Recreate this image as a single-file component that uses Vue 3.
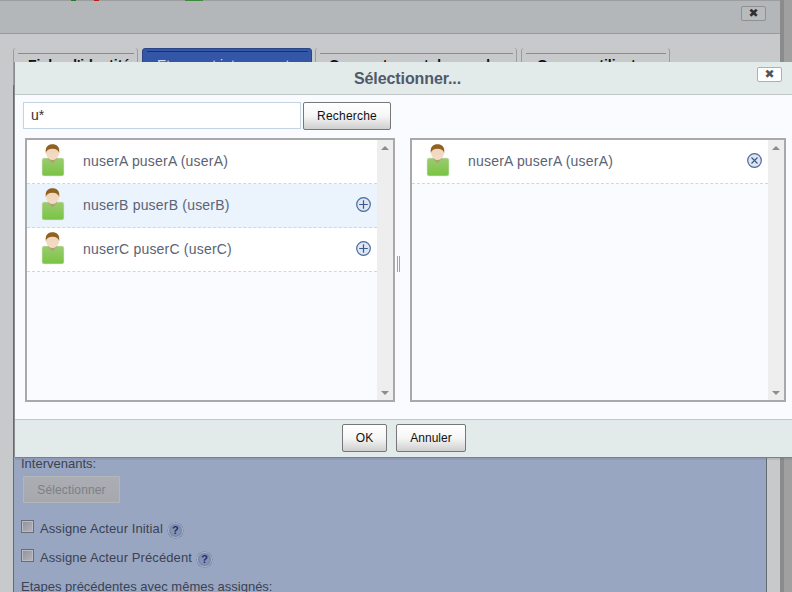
<script setup>
const left = [
  { name: 'nuserA puserA (userA)', action: '' },
  { name: 'nuserB puserB (userB)', action: 'add', hover: true },
  { name: 'nuserC puserC (userC)', action: 'add' },
]
const right = [{ name: 'nuserA puserA (userA)', action: 'remove' }]
const lists = [left, right]
const tabs = [
  { label: "Fiche d'identité", cls: 't1' },
  { label: 'Etapes et intervenants', cls: 't2 active' },
  { label: 'Comportement des modes', cls: 't3' },
  { label: 'Groupe utilisateur', cls: 't4' },
]
</script>

<template>
  <div class="page">
    <div class="back">
      <div class="back-head">
        <i class="bit b1"></i><i class="bit b2"></i><i class="bit b3"></i>
        <button class="x back-x">✖</button>
      </div>
      <div class="tabs">
        <div v-for="t in tabs" :key="t.label" class="tab" :class="t.cls"><span>{{ t.label }}</span></div>
      </div>
      <div class="panel">
        <div class="form">
          <div class="lab">Intervenants:</div>
          <button class="disabled">Sélectionner</button>
          <label class="chk c1"><i class="box"></i><span>Assigne Acteur Initial</span><i class="help">?</i></label>
          <label class="chk c2"><i class="box"></i><span>Assigne Acteur Précédent</span><i class="help">?</i></label>
          <div class="lab last">Etapes précédentes avec mêmes assignés:</div>
        </div>
      </div>
    </div>

    <div class="modal">
      <div class="m-head">
        <h1>Sélectionner...</h1>
        <button class="x m-x">✖</button>
      </div>
      <div class="m-body">
        <div class="search">
          <div class="input">u*</div>
          <button class="btn rech">Recherche</button>
        </div>
        <div class="lists">
          <template v-for="(list, li) in lists" :key="li">
            <div class="list" :class="li ? 'lr' : 'll'">
              <div class="rows">
                <div v-for="u in list" :key="u.name" class="row" :class="{ hover: u.hover }">
                  <svg class="avatar" width="24" height="33" viewBox="0 0 24 33">
                    <defs>
                      <linearGradient :id="'g' + li + u.name[5]" x1="0" y1="0" x2="0" y2="1">
                        <stop offset="0" stop-color="#9ccb70" />
                        <stop offset="1" stop-color="#78c443" />
                      </linearGradient>
                      <linearGradient :id="'f' + li + u.name[5]" x1="0" y1="0" x2="0" y2="1">
                        <stop offset="0" stop-color="#efd3b6" />
                        <stop offset="1" stop-color="#f3dcc6" />
                      </linearGradient>
                    </defs>
                    <rect x="1" y="14" width="22" height="18" rx="2" :fill="'url(#g' + li + u.name[5] + ')'" stroke="#dfe8d8" stroke-width="0.6" />
                    <path d="M6.5 14 L11.5 19.5 L16.5 14 Z" fill="#a9a56f" />
                    <ellipse cx="11.5" cy="8.5" rx="6.6" ry="7.5" :fill="'url(#f' + li + u.name[5] + ')'" />
                    <path d="M4.8 9 C4 2.5 7.5 .3 11.5 .3 C15.5 .3 19 2.5 18.2 9 C17.6 6.5 15.5 4.8 11.5 4.8 C7.5 4.8 5.4 6.5 4.8 9 Z" fill="#8f6122" />
                  </svg>
                  <span class="name">{{ u.name }}</span>
                  <svg v-if="u.action" class="act" width="15" height="15" viewBox="0 0 15 15">
                    <circle cx="7.5" cy="7.5" r="6.8" fill="#dfe6f1" stroke="#466a9f" stroke-width="1.2" />
                    <path v-if="u.action === 'add'" d="M7.5 3.2V11.8M3.2 7.5H11.8" stroke="#3a5a8d" stroke-width="1.2" fill="none" />
                    <path v-else d="M4.5 4.5L10.5 10.5M10.5 4.5L4.5 10.5" stroke="#3a5a8d" stroke-width="1.2" fill="none" />
                  </svg>
                </div>
              </div>
              <div class="sb">
                <i class="up"></i>
                <i class="down"></i>
              </div>
            </div>
            <div v-if="!li" class="split"><i></i></div>
          </template>
        </div>
      </div>
      <div class="m-foot">
        <button class="btn ok">OK</button>
        <button class="btn cancel">Annuler</button>
      </div>
    </div>
  </div>
</template>

<style>
html, body { margin: 0; padding: 0; overflow: hidden; }
</style>

<style scoped>
.page {
  position: relative; width: 792px; height: 592px; overflow: hidden;
  background: #a0a0a0; font-family: "Liberation Sans", Arial, sans-serif;
}
.back {
  width: 780px; height: 592px; background: #c8c9ca;
  border-right: 4px solid #8b8b8b; display: flex; flex-direction: column;
}
.back-head {
  position: relative; height: 32px; background: #b3b7b9;
  border-top: 1px solid #9b9d9e; border-bottom: 1px solid #979a9b; flex: none;
}
.bit { position: absolute; top: -1px; height: 1px; }
.b1 { left: 71px; width: 5px; background: #1f7a2c; }
.b2 { left: 94px; width: 5px; background: #b3201c; }
.b3 { left: 185px; width: 18px; background: #3d8a3d; }
.x {
  box-sizing: border-box; width: 25px; height: 15px; padding: 0; border-radius: 2px;
  font: 12px/13px "DejaVu Sans", sans-serif; text-align: center;
}
.back-x {
  position: absolute; left: 741px; top: 5px;
  background: #b8bbbd; border: 1px solid #8e9091; color: #2e2e2e;
}
.tabs { display: flex; gap: 4px; padding: 14px 0 0 13px; height: 37px; flex: none; }
.tab {
  box-sizing: border-box; height: 37px; padding-top: 9px;
  font: bold 14px/16px "Liberation Sans", sans-serif; color: #111;
  position: relative; white-space: nowrap; overflow: hidden;
  border-left: 1px solid #9c9d9e; border-right: 1px solid #9c9d9e; border-radius: 3px 3px 0 0;
}
.tab::before {
  content: ""; position: absolute; left: 4px; right: 3px; top: 5px; height: 1px; background: #8a8b8c;
}
.t1 { width: 125px; padding-left: 14px; }
.t2 {
  width: 170px; padding: 8px 0 0 14px; background: #3356a6; border: 1px solid #2a4687; color: #d5ddf0;
  font-weight: normal;
}
.t2::before { background: #1d3266; top: 2px; }
.t3 { width: 202px; padding-left: 13px; margin-left: -1px; }
.t4 { width: 149px; padding-left: 15px; }
.panel {
  flex: 1; margin-left: 13px; width: 754px; box-sizing: border-box; background: #99a6c1;
  border-left: 1px solid #666a72; border-right: 1px solid #666a72; position: relative;
}
.form {
  padding: 371px 0 0 7px; color: #3a4254; display: flex; flex-direction: column; align-items: flex-start;
}
.lab { font-size: 13px; line-height: 16px; white-space: nowrap; }
.disabled {
  box-sizing: border-box; width: 97px; height: 27px; margin: 4px 0 0 2px; padding: 0;
  background: linear-gradient(#aaaeb4, #a6a8ac); border: 1px solid #b4b6b8; border-radius: 1px;
  color: #7d8086; font: 12px "Liberation Sans", sans-serif; letter-spacing: .15px;
}
.chk { display: flex; align-items: center; height: 16px; font-size: 13px; letter-spacing: .1px; }
.c1 { margin-top: 17px; }
.c2 { margin-top: 13px; }
.box {
  box-sizing: border-box; width: 13px; height: 13px; margin-right: 6px; margin-top: -3px;
  border: 1px solid #686d77; box-shadow: inset 0 0 0 1px #b9bcc4; background: linear-gradient(135deg, #8f9199, #b4b6bb);
}
.help {
  width: 15px; height: 15px; border-radius: 50%; margin-left: 5px; margin-top: 4px; box-sizing: border-box;
  background: radial-gradient(circle, #8594b6 0 45%, #6f7fa3 75%); border: 1px solid #a9b3c9;
  box-shadow: 0 0 0 .5px #717b93; color: #1f2f66;
  font: bold 11px/13px "Liberation Sans", sans-serif; text-align: center; letter-spacing: 0;
}
.last { margin-top: 14px; }

.modal {
  position: absolute; left: 15px; top: 62px; width: 777px; height: 395px;
  display: flex; flex-direction: column; background: #fafbfe;
  box-shadow: -1px 0 0 #8a8c90, 0 1px 0 #7c7f86, 0 3px 0 rgba(70, 80, 110, .12);
}
.m-head {
  position: relative; height: 32px; background: #e2eaea; border-bottom: 1px solid #c3c6c6; flex: none;
  display: flex; justify-content: center;
}
h1 {
  margin: 0; font: bold 16px/33px "Liberation Sans", sans-serif; color: #4f5a6b; padding-right: 0; margin-left: 8px; letter-spacing: -.1px;
}
.m-x {
  position: absolute; left: 742px; top: 5px; background: #fff; border: 1px solid #aeb0b0; color: #555;
}
.m-body { flex: 1; padding: 7px 6px 0 8px; display: flex; flex-direction: column; min-height: 0; }
.search { display: flex; gap: 2px; align-items: flex-start; height: 36px; flex: none; }
.input {
  box-sizing: border-box; width: 278px; height: 27px; background: #fff; border: 1px solid #c3d5e3;
  font-size: 14px; line-height: 24px; padding-left: 7px; color: #333;
}
.btn {
  box-sizing: border-box; padding: 0; border: 1px solid #777; border-radius: 2px;
  background: linear-gradient(#fff 0%, #f6f6f6 50%, #cfcfcf 100%); color: #111;
  font: 12px "Liberation Sans", sans-serif;
}
.rech { width: 88px; height: 28px; letter-spacing: .2px; }
.lists { display: flex; margin-left: 2px; height: 264px; flex: none; }
.list {
  box-sizing: border-box; border: 2px solid #a9a9a9; height: 264px; display: flex; background: #fafbfe;
}
.ll { width: 370px; }
.lr { width: 376px; }
.split { width: 15px; flex: none; display: flex; padding: 118px 0 0 2px; box-sizing: border-box; }
.split i { display: block; width: 1px; height: 16px; border-left: 1px solid #9fa3a8; border-right: 1px solid #9fa3a8; }
.rows { flex: 1; min-width: 0; }
.row {
  box-sizing: border-box; height: 44px; display: flex; align-items: flex-start; background: #fff;
  border-bottom: 1px dashed #d3d6da; padding-left: 14px;
}
.row.hover { background: #ebf3fd; }
.avatar { margin-top: 4px; flex: none; }
.name { margin: 13px 0 0 18px; font-size: 14px; line-height: 16px; color: #5b6374; white-space: nowrap; letter-spacing: .2px; }
.act { margin: 13px 6px 0 auto; flex: none; }
.sb {
  width: 16px; flex: none; background: #eee; display: flex; flex-direction: column;
  justify-content: space-between; align-items: center; padding: 6px 0 5px; box-sizing: border-box;
}
.up, .down { display: block; width: 0; height: 0; border-left: 4px solid transparent; border-right: 4px solid transparent; }
.up { border-bottom: 4px solid #8c8c8c; }
.down { border-top: 4px solid #8c8c8c; }
.m-foot {
  height: 38px; box-sizing: border-box; background: #e2eaea; border-top: 1px solid #c3c8c8; flex: none;
  display: flex; gap: 9px; padding: 4px 0 0 327px; align-items: flex-start;
}
.ok { width: 45px; height: 28px; }
.cancel { width: 70px; height: 28px; }
</style>
